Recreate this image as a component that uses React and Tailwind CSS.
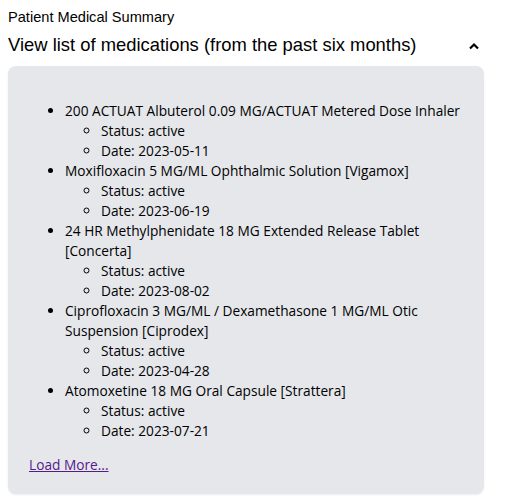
const medications = [
  { name: "200 ACTUAT Albuterol 0.09 MG/ACTUAT Metered Dose Inhaler", status: "active", date: "2023-05-11" },
  { name: "Moxifloxacin 5 MG/ML Ophthalmic Solution [Vigamox]", status: "active", date: "2023-06-19" },
  { name: "24 HR Methylphenidate 18 MG Extended Release Tablet [Concerta]", status: "active", date: "2023-08-02" },
  { name: "Ciprofloxacin 3 MG/ML / Dexamethasone 1 MG/ML Otic Suspension [Ciprodex]", status: "active", date: "2023-04-28" },
  { name: "Atomoxetine 18 MG Oral Capsule [Strattera]", status: "active", date: "2023-07-21" },
];

function App() {
  return (
    <div className="bg-white min-h-[498px] px-2 pt-[7px] font-['Liberation_Sans',Arial,sans-serif]">
      <div className="text-[14.6px] leading-[20px] text-black">Patient Medical Summary</div>
      <div className="flex items-center justify-between pr-[30px] pt-[6px] pb-[9px]">
        <h2 className="text-[18.4px] leading-[24px] text-black">
          View list of medications (from the past six months)
        </h2>
        <svg width="12" height="8" viewBox="0 0 12 8" className="mt-[1px] mr-[-9px]">
          <path d="M2 6.5 L6 2.5 L10 6.5" fill="none" stroke="#000" strokeWidth="2.2" />
        </svg>
      </div>
      <div className="w-[476px] bg-[#e5e7eb] rounded-lg shadow-[0_1px_2px_rgba(0,0,0,0.08)] px-4 pt-4 pb-[19px] font-['Open_Sans','Noto_Sans',sans-serif] text-[13.7px] leading-[20px] text-black">
        <ul className="list-disc pl-[41px] mt-[19px] mb-[14px]">
          {medications.map((m) => (
            <li key={m.name}>
              {m.name}
              <ul className="list-[circle] pl-[36px]">
                <li>Status: {m.status}</li>
                <li>Date: {m.date}</li>
              </ul>
            </li>
          ))}
        </ul>
        <a href="#" className="underline text-[#551a8b] pl-[5px]">
          Load More...
        </a>
      </div>
    </div>
  );
}

export default App;
